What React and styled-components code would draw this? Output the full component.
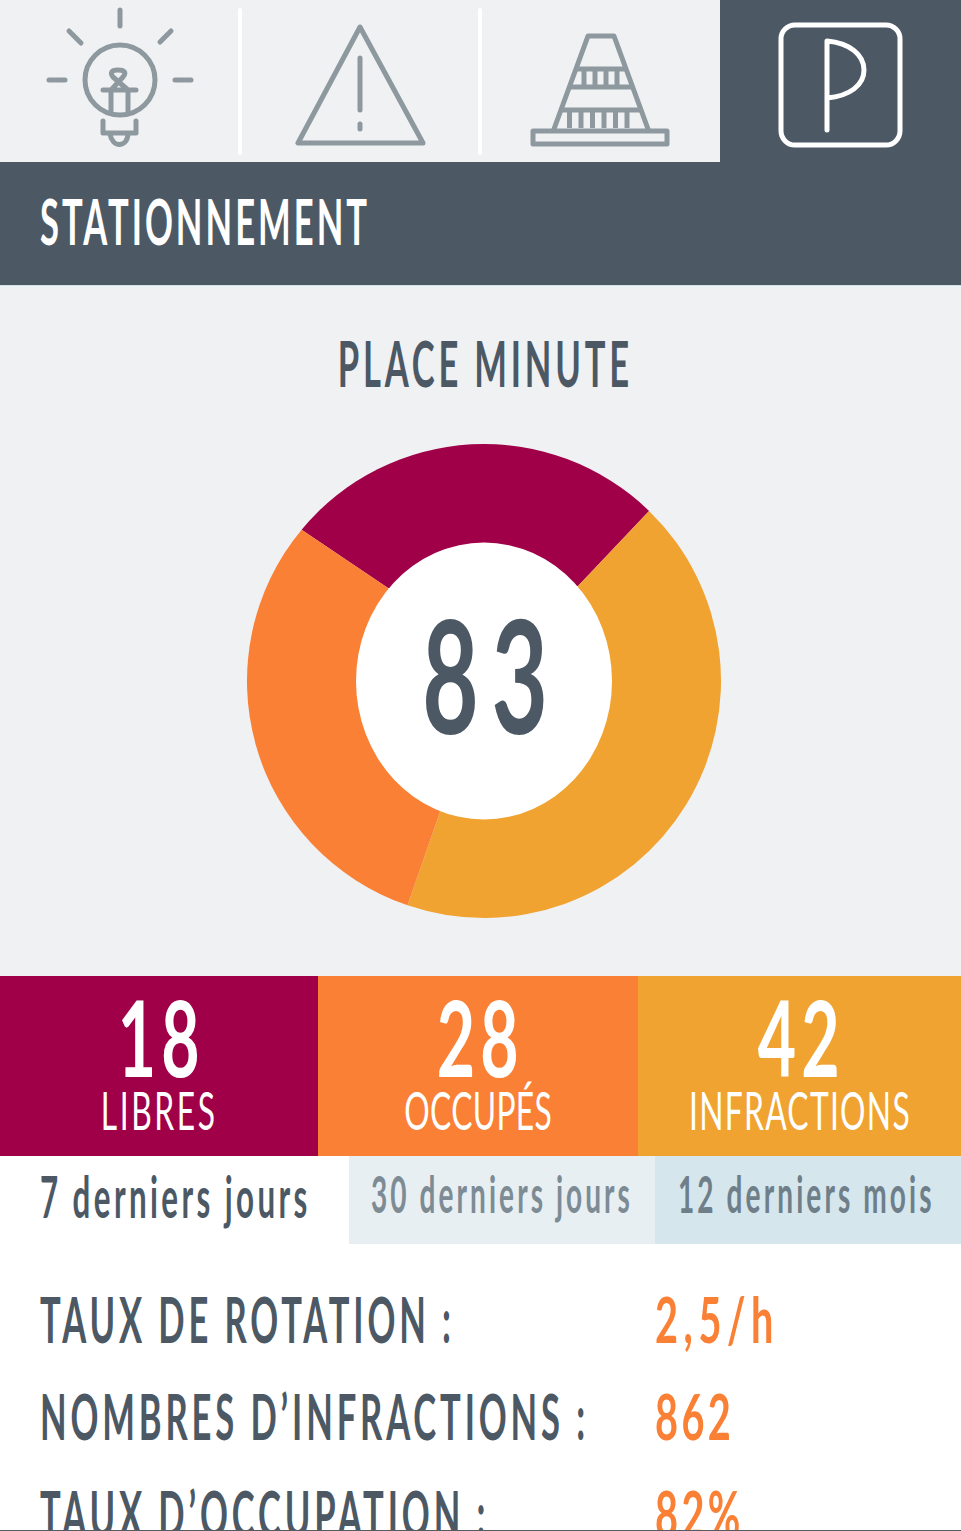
import styled, { createGlobalStyle } from 'styled-components';

const DARK = '#4c5965';
const ICON = '#8d999f';
const CRIMSON = '#a00048';
const ORANGE = '#f98035';
const YELLOW = '#f0a330';

const stats = [
  { value: '18', label: 'LIBRES', color: CRIMSON, width: 318, ls: 0.08 },
  { value: '28', label: 'OCCUPÉS', color: ORANGE, width: 320, ls: 0.01 },
  { value: '42', label: 'INFRACTIONS', color: YELLOW, width: 323, ls: 0.04 },
];

const rows = [
  { label: 'TAUX DE ROTATION :', value: '2,5/h', ls: 0.14 },
  { label: 'NOMBRES D’INFRACTIONS :', value: '862', ls: 0.085 },
  { label: 'TAUX D’OCCUPATION :', value: '82%', ls: 0.085 },
];

// donut edge point, pushed onto the outer circle
const onRing = (x, y) => {
  const k = 237 / Math.hypot(x - 484, y - 681);
  return `${484 + (x - 484) * k} ${681 + (y - 681) * k}`;
};
const ringA = onRing(302, 530);
const ringB = onRing(649, 511);
const ringC = onRing(408, 904);

function App() {
  return (
    <Page>
      <GlobalStyle />
      <TabBar>
        <IconTab $width={238}>
          <IconSvg viewBox="0 0 238 162" width="238" height="162">
            <path d="M120 10V26M49 80H65M175 80H191M69 31L81 43M171 31L160 42" />
            <circle cx="120" cy="80" r="35" />
            <path d="M103 90H136M111 90V113M128 90V113M111 90L123 77C127 72 124 70 118 70C111 70 110 73 113 77L128 90" />
            <path d="M103 121V133H136V121M110 134C112 148 127 148 128 134" />
          </IconSvg>
        </IconTab>
        <Divider />
        <IconTab $width={236}>
          <IconSvg viewBox="242 0 236 162" width="236" height="162">
            <path d="M360 27L298 143H423Z" />
            <path d="M360 58V110M360 124V129" />
          </IconSvg>
        </IconTab>
        <Divider />
        <IconTab $width={238}>
          <IconSvg viewBox="482 0 238 162" width="238" height="162">
            <rect x="533" y="131" width="134" height="13" />
            <path d="M554 129L588 36H614L648 129" />
            <path d="M577 69H625M570 87H632M563 110H640" />
            <path d="M584 70V86M595 70V86M606 70V86M617 70V86" strokeLinecap="butt" />
            <path d="M569.5 112V128M581 112V128M592.5 112V128M604 112V128M615.5 112V128M627 112V128" strokeLinecap="butt" />
          </IconSvg>
        </IconTab>
        <ActiveTab>
          <ActiveSvg viewBox="720 0 241 162" width="241" height="162">
            <rect x="781" y="25" width="119" height="120" rx="14" />
            <path d="M827 130V41C850 43 864 55 864 70C864 85 850 96 827 98" />
          </ActiveSvg>
        </ActiveTab>
      </TabBar>

      <HeaderBar>
        <Condensed $sx={0.54} $ls={0.0875} $size={64} $weight={700}>STATIONNEMENT</Condensed>
      </HeaderBar>

      <ChartPanel>
        <ChartTitle>
          <Condensed $sx={0.54} $ls={0.11} $size={64} $center $weight={700} $color={DARK}>PLACE MINUTE</Condensed>
        </ChartTitle>
        <ChartWrap>
          <svg viewBox="247 444 474 474" width="474" height="474">
            <path d={`M${ringA}A237 237 0 0 1 ${ringB}L578 586L388 588Z`} fill={CRIMSON} />
            <path d={`M${ringB}A237 237 0 0 1 ${ringC}L440 812L578 586Z`} fill={YELLOW} />
            <path d={`M${ringC}A237 237 0 0 1 ${ringA}L388 588L440 812Z`} fill={ORANGE} />
            <ellipse cx="484" cy="681" rx="128" ry="138.5" fill="#fff" />
          </svg>
          <ChartCenter>
            <Condensed $sx={0.62} $ls={0.13} $size={157} $center $color={DARK} $weight={700}>83</Condensed>
          </ChartCenter>
        </ChartWrap>
      </ChartPanel>

      <StatRow>
        {stats.map((stat) => (
          <StatCell key={stat.label} $bg={stat.color} $width={stat.width}>
            <StatValue>
              <Condensed $sx={0.63} $ls={0.08} $size={105} $lh={0.85} $center $weight={700}>{stat.value}</Condensed>
            </StatValue>
            <StatLabel>
              <Condensed $sx={0.6} $ls={stat.ls} $size={53} $center>{stat.label}</Condensed>
            </StatLabel>
          </StatCell>
        ))}
      </StatRow>

      <PeriodRow>
        <Period $width={349} $bg="#fff" $lift={8}>
          <Condensed $sx={0.55} $ls={0.108} $size={57} $weight={700} $color={DARK}>7 derniers jours</Condensed>
        </Period>
        <Period $width={306} $bg="#e7eff3" $pad={22} $lift={14}>
          <Condensed $sx={0.55} $ls={0.109} $size={51} $weight={700} $color="#7d8b95">30 derniers jours</Condensed>
        </Period>
        <Period $width={306} $bg="#d6e6ed" $pad={23} $lift={14}>
          <Condensed $sx={0.55} $ls={0.11} $size={51} $weight={700} $color="#6f7f8a">12 derniers mois</Condensed>
        </Period>
      </PeriodRow>

      <Metrics>
        {rows.map((row) => (
          <MetricRow key={row.label}>
            <Condensed $sx={0.54} $ls={0.112} $size={64} $weight={700} $color={DARK}>{row.label}</Condensed>
            <Condensed $sx={0.62} $ls={row.ls} $size={64} $weight={700} $color={ORANGE}>{row.value}</Condensed>
          </MetricRow>
        ))}
      </Metrics>
    </Page>
  );
}

const GlobalStyle = createGlobalStyle`
  html, body {
    margin: 0;
    background: #fff;
    overflow: hidden;
  }
`;

const Page = styled.div`
  display: flex;
  flex-direction: column;
  width: 961px;
  height: 1531px;
  overflow: hidden;
  font-family: Lato, "Open Sans", sans-serif;
  border-bottom: 1px solid #555b60;
  box-sizing: border-box;
`;

const Condensed = styled.span`
  display: inline-block;
  white-space: nowrap;
  font-size: ${(p) => p.$size}px;
  font-weight: ${(p) => p.$weight || 400};
  letter-spacing: ${(p) => p.$ls || 0}em;
  color: ${(p) => p.$color || '#fff'};
  line-height: ${(p) => p.$lh || 1};
  transform: scaleX(${(p) => p.$sx});
  transform-origin: ${(p) => (p.$center ? 'center' : 'left')};
`;

const TabBar = styled.div`
  display: flex;
  height: 162px;
  background: #f0f1f3;
  flex-shrink: 0;
`;

const IconTab = styled.div`
  width: ${(p) => p.$width}px;
  height: 162px;
`;

const ActiveTab = styled.div`
  width: 241px;
  height: 162px;
  background: ${DARK};
`;

const Divider = styled.div`
  width: 4px;
  margin: 8px 0 7px;
  background: #fff;
  border-radius: 2px;
`;

const IconSvg = styled.svg`
  display: block;
  fill: none;
  stroke: ${ICON};
  stroke-width: 5;
  stroke-linecap: round;
  stroke-linejoin: round;
`;

const ActiveSvg = styled(IconSvg)`
  stroke: #fff;
`;

const HeaderBar = styled.div`
  display: flex;
  align-items: center;
  box-sizing: border-box;
  height: 123px;
  padding: 0 0 6px 40px;
  background: ${DARK};
  flex-shrink: 0;
`;

const ChartPanel = styled.div`
  display: flex;
  flex-direction: column;
  align-items: center;
  height: 691px;
  background: #f0f1f3;
  flex-shrink: 0;
  border-top: 1px solid #d3e2e8;
  box-sizing: border-box;
`;

const ChartTitle = styled.div`
  display: flex;
  justify-content: center;
  margin: 45px 0 0 9px;
  height: 113px;
`;

const ChartWrap = styled.div`
  position: relative;
  width: 474px;
  height: 474px;
  margin-left: 7px;
  svg {
    display: block;
  }
`;

const ChartCenter = styled.div`
  position: absolute;
  inset: 0;
  display: flex;
  align-items: center;
  justify-content: center;
  padding: 0 0 16px 15px;
  box-sizing: border-box;
`;

const StatRow = styled.div`
  display: flex;
  height: 180px;
  flex-shrink: 0;
`;

const StatCell = styled.div`
  display: flex;
  flex-direction: column;
  align-items: center;
  width: ${(p) => p.$width}px;
  background: ${(p) => p.$bg};
`;

const StatValue = styled.div`
  display: flex;
  justify-content: center;
  margin: 16px 0 0 4px;
  height: 91px;
`;

const StatLabel = styled.div`
  height: 60px;
`;

const PeriodRow = styled.div`
  display: flex;
  height: 88px;
  flex-shrink: 0;
`;

const Period = styled.div`
  display: flex;
  align-items: center;
  box-sizing: border-box;
  width: ${(p) => p.$width}px;
  padding: 0 0 ${(p) => p.$lift}px ${(p) => p.$pad || 40}px;
  background: ${(p) => p.$bg};
`;

const Metrics = styled.div`
  display: flex;
  flex-direction: column;
  padding: 43px 0 0 40px;
`;

const MetricRow = styled.div`
  display: grid;
  grid-template-columns: 615px 1fr;
  height: 97px;
`;

export default App;
